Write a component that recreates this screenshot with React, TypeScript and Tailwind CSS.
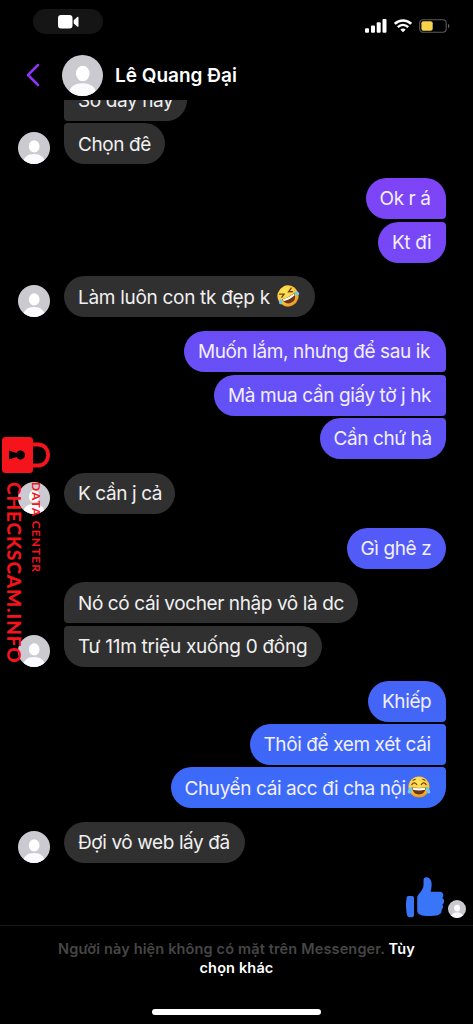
import React from 'react';

interface Message {
  text: string;
  // bubble width
  size: string;
  tracking?: string;
  // background, only for own messages
  tone?: string;
  emoji?: 'rofl' | 'joy';
}

interface MessageGroup {
  own: boolean;
  messages: Message[];
}

const groups: MessageGroup[] = [
  {
    own: false,
    messages: [
      { text: 'So dây này', size: 'w-[123px]' },
      { text: 'Chọn đê', size: 'w-[101px]' },
    ],
  },
  {
    own: true,
    messages: [
      { text: 'Ok r á', size: 'w-[80px]', tone: 'from-[#7e43f6] to-[#7b46f6]' },
      { text: 'Kt đi', size: 'w-[67.5px]', tone: 'from-[#7946f6] to-[#7548f6]' },
    ],
  },
  { own: false, messages: [{ text: 'Làm luôn con tk đẹp k', size: 'w-[250.5px]', tracking: 'tracking-[-0.3px]', emoji: 'rofl' }] },
  {
    own: true,
    messages: [
      { text: 'Muốn lắm, nhưng để sau ik', size: 'w-[261.5px]', tone: 'from-[#6b4df6] to-[#674ff6]' },
      { text: 'Mà mua cần giấy tờ j hk', size: 'w-[231.5px]', tone: 'from-[#6650f6] to-[#6252f6]' },
      { text: 'Cần chứ hả', size: 'w-[126px]', tone: 'from-[#6152f6] to-[#5d54f6]' },
    ],
  },
  { own: false, messages: [{ text: 'K cần j cả', size: 'w-[111px]' }] },
  { own: true, messages: [{ text: 'Gì ghê z', size: 'w-[99px]', tone: 'from-[#545af7] to-[#505cf7]' }] },
  {
    own: false,
    messages: [
      { text: 'Nó có cái vocher nhập vô là dc', size: 'w-[293.5px]' },
      { text: 'Tư 11m triệu xuống 0 đồng', size: 'w-[257.5px]', tracking: 'tracking-[-0.26px]' },
    ],
  },
  {
    own: true,
    messages: [
      { text: 'Khiếp', size: 'w-[77.5px]', tone: 'from-[#4564f7] to-[#4266f7]' },
      { text: 'Thôi để xem xét cái', size: 'w-[196px]', tone: 'from-[#4166f7] to-[#3e68f7]' },
      { text: 'Chuyển cái acc đi cha nội', size: 'w-[275px]', tone: 'from-[#3e69f8] to-[#3b6bf8]', emoji: 'joy' },
    ],
  },
  { own: false, messages: [{ text: 'Đợi vô web lấy đã', size: 'w-[180.5px]' }] },
];

const Avatar: React.FC<{ className: string }> = ({ className }) => (
  <svg viewBox="0 0 32 32" className={`shrink-0 rounded-full bg-[#cbcad1] ${className}`}>
    <ellipse cx="16.2" cy="14.4" rx="5.3" ry="6.100" fill="#fff" />
    <path d="M5 32C5.300 25 9.500 22 16 22S26.700 25 27 32Z" fill="#fafaff" />
  </svg>
);

const Emoji: React.FC<{ kind: 'rofl' | 'joy' }> = ({ kind }) => (
  <svg viewBox="0 0 24 24" className="inline-block size-[24px] shrink-0">
    <defs>
      <radialGradient id={`face-${kind}`} cx="45%" cy="28%" r="75%">
        <stop offset="0" stopColor="#ffe95c" />
        <stop offset=".65" stopColor="#fbc638" />
        <stop offset="1" stopColor="#e38b20" />
      </radialGradient>
    </defs>
    <g transform={kind === 'rofl' ? 'rotate(-28 12 12)' : undefined}>
      <circle cx="12" cy="12" r="10.600" fill={`url(#face-${kind})`} />
      {kind === 'rofl' ? (
        <path d="M5.500 6.500 9.500 8.500 6 10.200M18.500 6.500 14.500 8.500 18 10.200" fill="none" stroke="#70401a" strokeWidth="1.300" strokeLinecap="round" />
      ) : (
        <path d="M4.800 9.600Q7.200 6.300 9.800 9.600M14.200 9.600Q16.800 6.300 19.200 9.600M6 5.200 8.300 4.300M18 5.200 15.700 4.300" fill="none" stroke="#70401a" strokeWidth="1.200" strokeLinecap="round" />
      )}
      <path d="M5 12.300Q12 13.800 19 12.300C18.500 17 16 19.500 12 19.500S5.500 17 5 12.300Z" fill="#6e3512" />
      <path d="M5.500 12.600Q12 14 18.500 12.600L18 14.700Q12 16.300 6 14.700Z" fill="#fff" />
      {kind === 'rofl' ? (
        <path d="M4.800 11.500C2.400 11.500.6 13.200.8 14.700 1.100 16.400 3.400 16.300 4.200 14.700ZM19.200 11.500C21.600 11.500 23.400 13.200 23.200 14.700 22.900 16.400 20.600 16.300 19.800 14.700Z" fill="#6ac8f5" />
      ) : (
        <path d="M5.300 11.700C3 12.400.5 15 .6 17 1 19.300 3.900 18.900 4.500 16.700ZM18.700 11.700C21 12.400 23.500 15 23.400 17 23 19.300 20.100 18.900 19.500 16.700Z" fill="#6ac8f5" />
      )}
    </g>
  </svg>
);

const Bubble: React.FC<{ message: Message; own: boolean; first: boolean; last: boolean }> = ({ message, own, first, last }) => {
  const corners = own
    ? `${first ? '' : 'rounded-tr-[4px]'} ${last ? '' : 'rounded-br-[4px]'}`
    : `${first ? '' : 'rounded-tl-[4px]'} ${last ? '' : 'rounded-bl-[4px]'}`;
  return (
    <div
      className={`flex h-[41px] items-center rounded-[20.5px] pt-[2px] pl-3.5 text-[19px] whitespace-nowrap ${message.size} ${
        message.tracking ?? 'tracking-[-0.4px]'
      } ${corners} ${own ? `bg-linear-to-b text-[#f2efff] ${message.tone}` : 'bg-[#303030] text-[#f0f0f0]'}`}
    >
      <span>{message.text}</span>
      {message.emoji && (
        <span className={`-mt-1 flex ${message.emoji === 'rofl' ? 'ml-1.5' : 'ml-px'}`}>
          <Emoji kind={message.emoji} />
        </span>
      )}
    </div>
  );
};

const StatusBar: React.FC = () => (
  <div className="flex h-[50px] items-start justify-between pt-[9px] pr-[23px] pl-[33px]">
    <div className="flex h-[25px] w-[70px] items-center justify-center rounded-full bg-[#151515]">
      <svg viewBox="0 0 21 14" className="h-[14px] w-[21px]" fill="#fff">
        <rect x="0" y="0" width="14.500" height="13.500" rx="3" />
        <path d="M15.700 5.300 19.200 2Q20.500 1.200 20.500 2.700V10.900Q20.500 12.400 19.200 11.500L15.700 8.400Z" />
      </svg>
    </div>
    <div className="flex items-center pt-[10px]">
      <svg viewBox="0 0 22 14" className="h-[14px] w-[22px]" fill="#fff">
        <rect x="0" y="9.300" width="4" height="4.500" rx="1" />
        <rect x="6" y="6.500" width="4" height="7.300" rx="1" />
        <rect x="11.700" y="3.300" width="4" height="10.500" rx="1" />
        <rect x="17.500" y="0" width="4" height="13.800" rx="1" />
      </svg>
      <svg viewBox="0 0 18 14" className="ml-[7px] h-[14px] w-[18px]" fill="none" stroke="#fff" strokeWidth="2.500">
        <path d="M.8 4.800C5.500.3 12.500.3 17.200 4.800M3.800 8.100C6.900 5.200 11.100 5.200 14.200 8.100" />
        <path d="M6.300 10.600Q9 8.500 11.700 10.600L9 13.300Z" fill="#fff" stroke="none" />
      </svg>
      <svg viewBox="0 0 31 14" className="ml-[7.5px] h-[14px] w-[31px]">
        <rect x=".7" y=".7" width="26.500" height="12.600" rx="3.500" fill="none" stroke="#5b5b5b" strokeWidth="1.100" />
        <rect x="2.400" y="2.300" width="11.300" height="9.400" rx="2" fill="#f7d34b" />
        <path d="M29 4.600Q32 7 29 9.400Z" fill="#5b5b5b" />
      </svg>
    </div>
  </div>
);

const Header: React.FC = () => (
  <header className="h-[100px] shrink-0">
    <StatusBar />
    <div className="flex h-[50px] items-center pl-[26px]">
      <svg viewBox="0 0 14 24" className="h-[24px] w-[14px]" fill="none" stroke="#8c36f5" strokeWidth="2.500" strokeLinecap="round" strokeLinejoin="round">
        <path d="M12 2 2 12 12 22" />
      </svg>
      <Avatar className="ml-[22px] size-[41px]" />
      <h1 className="ml-[12px] pt-[2px] text-[19px] font-semibold whitespace-nowrap text-white">Lê Quang Đại</h1>
    </div>
  </header>
);

const Watermark: React.FC = () => (
  <div className="pointer-events-none absolute top-[437px] left-0 w-[52px] font-['Lato',sans-serif] text-[#f5141b]">
    <svg viewBox="0 0 50 37" className="h-[37px] w-[50px]">
      <rect x="2" y="0" width="31" height="36" rx="3.500" fill="currentColor" />
      <path d="M32 7.500H38C51.500 7.500 51.500 28.500 38 28.500H32" fill="none" stroke="currentColor" strokeWidth="3.800" />
      <path d="M9 13.500 16.500 16A4.500 4.500 0 1 1 16.500 20L9 22.500Z" fill="#000" />
    </svg>
    <div className="absolute top-[45px] left-[3px] w-[23px] text-[19px] leading-[23px] font-black tracking-[0.9px] whitespace-nowrap [writing-mode:vertical-rl]">
      CHECKSCAM.INFO
    </div>
    <div className="absolute top-[45px] left-[28px] w-[17px] text-[12px] leading-[17px] font-bold tracking-[1.05px] whitespace-nowrap [writing-mode:vertical-rl]">
      DATA CENTER
    </div>
  </div>
);

export default function App() {
  return (
    <div className="relative flex h-[1024px] w-[473px] flex-col overflow-hidden bg-black font-['Inter',sans-serif]">
      <Header />
      <main className="h-[825px] shrink-0 overflow-hidden">
        <div className="-mt-[20px] flex flex-col gap-[13.85px]">
          {groups.map((group, index) => (
            <div key={index} className={`flex items-end ${group.own ? 'justify-end pr-[27.500px]' : 'pl-[18px]'}`}>
              {!group.own && <Avatar className="mr-[14px] size-[32px]" />}
              <div className={`flex flex-col gap-[2.35px] ${group.own ? 'items-end' : 'items-start'}`}>
                {group.messages.map((message, i) => (
                  <Bubble
                    key={message.text}
                    message={message}
                    own={group.own}
                    first={i === 0}
                    last={i === group.messages.length - 1}
                  />
                ))}
              </div>
            </div>
          ))}
          <div className="flex items-end justify-end gap-[4px] pr-[7px]">
            <svg viewBox="0 0 38 41" className="h-[41px] w-[38px]" fill="#3975f7">
              <path d="M2 19H6Q8 19 8 21V38Q8 40.300 6 40.300H3.500Q1.500 40.300.8 37Q-.7 28 .6 21Q1 19 2 19Z" />
              <path d="M17.600 2Q18 .2 20.500.3C24.500.8 26 4.500 25.600 8.500Q25.300 12.500 24.600 14.800H34Q37 15.200 37.300 18Q37.400 20 36.300 21Q39 23 37.700 26Q37.200 27.200 36.400 27.700Q38 30.500 35.800 32.500Q36 36 33.500 37.300Q31.500 39 25 39C19 39.500 11.400 38.500 11.200 34V20.500Q11.200 19 12.500 17.500C15 14.500 17.500 11.500 17.500 8.500Z" />
            </svg>
            <Avatar className="size-[18px]" />
          </div>
        </div>
      </main>
      <footer className="flex flex-1 flex-col items-center justify-between border-t border-[#181818] pt-[13px] pb-[9px]">
        <p className="text-center text-[14.5px] leading-[19px] font-semibold tracking-[0.15px] whitespace-nowrap text-[#464646]">
          Người này hiện không có mặt trên Messenger. <span className="text-white">Tùy<br />chọn khác</span>
        </p>
        <div className="h-[6px] w-[169px] rounded-full bg-white" />
      </footer>
      <Watermark />
    </div>
  );
}
